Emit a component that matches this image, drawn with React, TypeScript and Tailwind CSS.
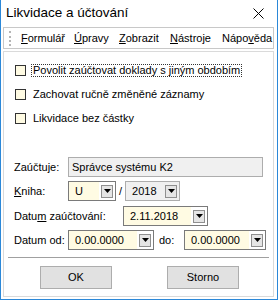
import type { ReactNode } from 'react'

const font = { fontFamily: '"Liberation Sans", Arial, sans-serif' }

function Caret() {
  return (
    <span className="flex h-[13px] w-[12px] items-center justify-center border border-[#8f8f8f] bg-[#e5e5e5]">
      <svg width="7" height="4" viewBox="0 0 7 4">
        <path d="M0 0h7L3.5 4z" fill="#000" />
      </svg>
    </span>
  )
}

function Combo({ value, width, grey }: { value: string; width: string; grey?: boolean }) {
  return (
    <div className={`flex h-[20px] items-stretch border border-[#7a7a7a] ${width} ${grey ? 'bg-[#f0f0f0] border-[#adadad]' : 'bg-white'}`}>
      <div className={`flex flex-1 items-center pl-[6px] ${grey ? '' : 'bg-[#fffbe3]'}`}>{value}</div>
      <div className="flex items-center px-[2px]">
        <Caret />
      </div>
    </div>
  )
}

function Check({ children, focus }: { children: ReactNode; focus?: boolean }) {
  return (
    <div className="flex h-6 items-center">
      <span className="ml-[11px] h-[11px] w-[11px] border border-[#333] bg-[#fffbe3]" />
      <span className={`ml-[6px] px-px leading-[11px] ${focus ? 'outline-1 outline-dotted outline-[#333]' : ''}`}>{children}</span>
    </div>
  )
}

export default function App() {
  return (
    <div className="h-[300px] w-[278px] border-x border-b border-[#2b88d8] bg-white text-[11px] text-black" style={font}>
      <div className="flex h-[26px] items-center justify-between pl-[5px] pr-[13px]">
        <span className="text-[13.5px]">Likvidace a účtování</span>
        <svg width="11" height="11" viewBox="0 0 11 11">
          <path d="M0.5 0.5l10 10M10.5 0.5l-10 10" stroke="#000" strokeWidth="1" />
        </svg>
      </div>

      <div className="mx-[2px] mt-px flex h-[22px] w-[271px] items-center border border-[#c8c8c8] bg-white">
        <span className="ml-[5px] h-[15px] border-l-2 border-dotted border-[#b5b5b5]" />
        <div className="ml-[10px] flex whitespace-nowrap text-[11px]">
          <span className="w-[53px]"><u>F</u>ormulář</span>
          <span className="w-[45px]"><u>Ú</u>pravy</span>
          <span className="w-[51px]"><u>Z</u>obrazit</span>
          <span className="w-[52px]"><u>N</u>ástroje</span>
          <span>Nápo<u>v</u>ěda</span>
        </div>
      </div>

      <div className="mx-[2px] mt-[2px] h-[246px] w-[271px] border border-[#dadada] pt-[6px]">
        <Check focus>Povolit zaúčtovat doklady s jiným obdobím</Check>
        <Check>Zachovat ručně změněné záznamy</Check>
        <Check>Likvidace bez částky</Check>

        <div className="ml-[10px] mt-[27px] flex h-[20px] items-center">
          <span className="w-[54px]">Zaúčtuje:</span>
          <div className="flex h-[20px] w-[195px] items-center border border-[#adadad] bg-[#f0f0f0] pl-[3px]">Správce systému K2</div>
        </div>

        <div className="ml-[10px] mt-[4px] flex h-[20px] items-center">
          <span className="w-[54px]"><u>K</u>niha:</span>
          <Combo value="U" width="w-[48px]" />
          <span className="mx-[3px]">/</span>
          <Combo value="2018" width="w-[55px]" grey />
        </div>

        <div className="ml-[10px] mt-[5px] flex h-[20px] items-center">
          <span className="w-[109px]">Datu<u>m</u> zaúčtování:</span>
          <Combo value="2.11.2018" width="w-[85px]" />
        </div>

        <div className="ml-[10px] mt-[4px] flex h-[20px] items-center">
          <span className="w-[54px]">Datum od:</span>
          <Combo value="0.00.0000" width="w-[86px]" />
          <span className="ml-[5px] w-[25px]">do:</span>
          <Combo value="0.00.0000" width="w-[82px]" />
        </div>

        <div className="ml-[4px] mt-[7px] h-px w-[261px] bg-[#a0a0a0]" />

        <div className="mt-[8px] flex">
          <button className="ml-[36px] h-[23px] w-[72px] border border-[#adadad] bg-[#e1e1e1]">OK</button>
          <button className="ml-[55px] h-[23px] w-[72px] border border-[#adadad] bg-[#e1e1e1]">Storno</button>
        </div>
      </div>
    </div>
  )
}
